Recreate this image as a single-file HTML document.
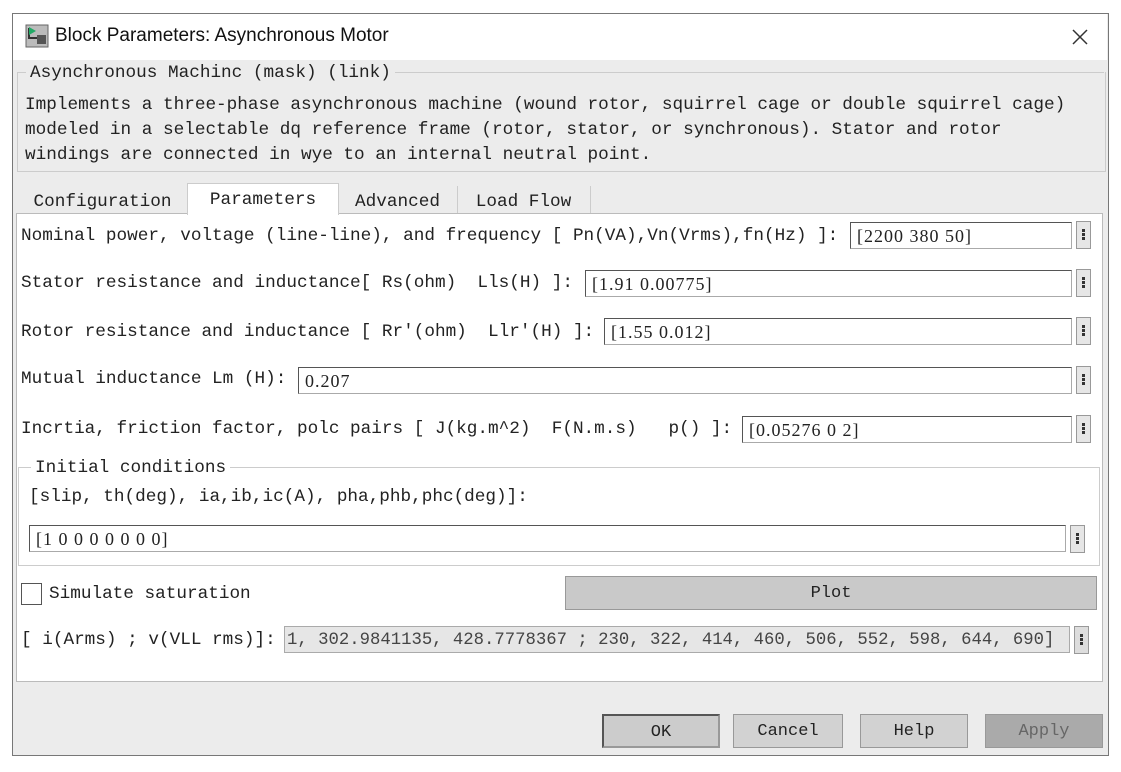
<!DOCTYPE html>
<html><head><meta charset="utf-8"><style>
body{margin:0;width:1121px;height:772px;background:#fff;position:relative;overflow:hidden;font-family:"Liberation Mono","Noto Serif CJK SC",monospace;font-size:17.7px;color:#222}
.a{position:absolute;white-space:pre}
.win{position:absolute;left:12px;top:13px;width:1095px;height:741px;border:1px solid #777;background:#ececec}
.title{position:absolute;left:13px;top:14px;width:1094px;height:46px;background:#fff}
.inp{position:absolute;background:#fff;border:1px solid #555;border-right-color:#aaa;border-bottom-color:#aaa;height:27px;box-sizing:border-box;padding-left:6px;line-height:27px;font-family:"Liberation Serif",serif;font-size:18px;letter-spacing:1px}
.mb{position:absolute;width:15px;height:28px;background:#e6e6e6;border:1px solid #999;box-sizing:border-box}
.mb:before{content:"";position:absolute;left:5px;top:7px;width:3px;height:3px;background:#333;box-shadow:0 4px 0 #333,0 8px 0 #333}
.btn{position:absolute;height:34px;box-sizing:border-box;border:1px solid #999;background:#d2d2d2;text-align:center;line-height:34px;font-size:17px}
</style></head><body>
<div class="win"></div>
<div class="title"></div>
<svg class="a" style="left:25px;top:24px" width="24" height="24"><rect x="1" y="1" width="22" height="22" fill="#bbb" stroke="#666"/><path d="M4 4v10h8" stroke="#333" fill="none" stroke-width="2"/><path d="M4 3l7 4-7 4z" fill="#2a6"/><rect x="12" y="11" width="9" height="9" fill="#555"/></svg>
<div class="a" style="left:55px;top:25px;font-family:'Liberation Sans',sans-serif;font-size:19px;color:#111">Block Parameters: Asynchronous Motor</div>
<svg class="a" style="left:1071px;top:28px" width="18" height="18"><path d="M2 2L16 16M16 2L2 16" stroke="#333" stroke-width="1.5"/></svg>
<div class="a" style="left:17px;top:72px;width:1087px;height:99px;border:1px solid #ccc;border-top:none"></div>
<div class="a" style="left:17px;top:72px;width:1087px;border-top:1px solid #ccc"></div>
<div class="a" style="left:26px;top:63px;background:#ececec;padding:0 4px">Asynchronous Machinc (mask) (link)</div>
<div class="a" style="left:25px;top:93px;line-height:25px">Implements a three-phase asynchronous machine (wound rotor, squirrel cage or double squirrel cage)
modeled in a selectable dq reference frame (rotor, stator, or synchronous). Stator and rotor
windings are connected in wye to an internal neutral point.</div>
<div class="a" style="left:18px;top:186px;width:169px;height:27px;border-right:1px solid #ccc;text-align:center;line-height:32px">Configuration</div>
<div class="a" style="left:187px;top:183px;width:150px;height:31px;background:#fff;border:1px solid #ccc;border-bottom:none;text-align:center;line-height:32px;z-index:2">Parameters</div>
<div class="a" style="left:338px;top:186px;width:119px;height:27px;border-right:1px solid #ccc;text-align:center;line-height:32px">Advanced</div>
<div class="a" style="left:457px;top:186px;width:133px;height:27px;border-right:1px solid #ccc;text-align:center;line-height:32px">Load Flow</div>
<div class="a" style="left:16px;top:213px;width:1085px;height:467px;background:#fff;border:1px solid #bbb"></div>

<div class="a" style="left:21px;top:226px">Nominal power, voltage (line-line), and frequency [ Pn(VA),Vn(Vrms),fn(Hz) ]:</div>
<div class="inp" style="left:850px;top:222px;width:222px">[2200 380 50]</div><div class="mb" style="left:1076px;top:221px"></div>
<div class="a" style="left:21px;top:273px">Stator resistance and inductance[ Rs(ohm)  Lls(H) ]:</div>
<div class="inp" style="left:585px;top:270px;width:487px">[1.91 0.00775]</div><div class="mb" style="left:1076px;top:269px"></div>
<div class="a" style="left:21px;top:322px">Rotor resistance and inductance [ Rr'(ohm)  Llr'(H) ]:</div>
<div class="inp" style="left:604px;top:318px;width:468px">[1.55 0.012]</div><div class="mb" style="left:1076px;top:317px"></div>
<div class="a" style="left:21px;top:369px">Mutual inductance Lm (H):</div>
<div class="inp" style="left:298px;top:367px;width:774px">0.207</div><div class="mb" style="left:1076px;top:366px"></div>
<div class="a" style="left:21px;top:419px">Incrtia, friction factor, polc pairs [ J(kg.m^2)  F(N.m.s)   p() ]:</div>
<div class="inp" style="left:742px;top:416px;width:330px">[0.05276 0 2]</div><div class="mb" style="left:1076px;top:415px"></div>

<div class="a" style="left:18px;top:467px;width:1080px;height:97px;border:1px solid #ccc"></div>
<div class="a" style="left:31px;top:458px;background:#fff;padding:0 4px">Initial conditions</div>
<div class="a" style="left:29px;top:487px">[slip, th(deg), ia,ib,ic(A), pha,phb,phc(deg)]:</div>
<div class="inp" style="left:29px;top:525px;width:1037px">[1 0 0 0 0 0 0 0]</div><div class="mb" style="left:1070px;top:525px"></div>

<div class="a" style="left:21px;top:583px;width:19px;height:20px;border:1px solid #555;background:#fff"></div>
<div class="a" style="left:49px;top:584px">Simulate saturation</div>
<div class="btn" style="left:565px;top:576px;width:532px;background:#c9c9c9;border-color:#999">Plot</div>
<div class="a" style="left:21px;top:630px">[ i(Arms) ; v(VLL rms)]:</div>
<div class="inp" style="left:284px;top:626px;width:786px;background:#e6e6e6;border-color:#aaa;color:#444;font-family:'Liberation Mono',monospace;font-size:17.3px;letter-spacing:0;padding-left:2px">1,  302.9841135,  428.7778367 ; 230,  322,  414,  460,  506,  552,  598,  644,  690]</div><div class="mb" style="left:1074px;top:626px;background:#ddd"></div>

<div class="btn" style="left:602px;top:714px;width:118px;border:2px solid #555;border-right-color:#999;border-bottom-color:#999;background:#ccc">OK</div>
<div class="btn" style="left:733px;top:714px;width:110px">Cancel</div>
<div class="btn" style="left:860px;top:714px;width:108px">Help</div>
<div class="btn" style="left:985px;top:714px;width:118px;background:#aaa;color:#666">Apply</div>
</body></html>
